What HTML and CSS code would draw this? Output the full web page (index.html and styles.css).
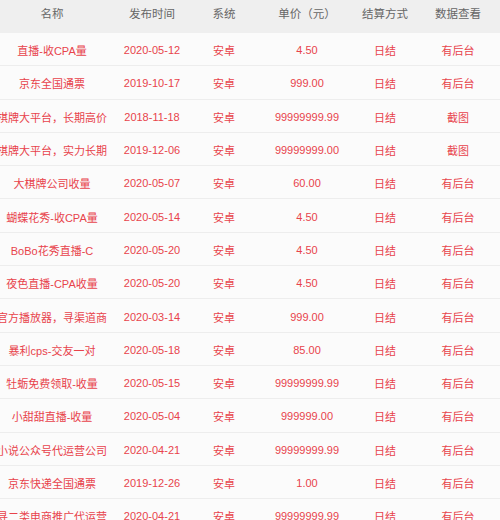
FILE: index.html
```html
<!DOCTYPE html>
<html lang="zh-CN">
<head>
<meta charset="utf-8">
<title>列表</title>
<link rel="stylesheet" href="styles.css">
</head>
<body>
<div class="table">
  <div class="row head">
    <div class="cell">名称</div><div class="cell">发布时间</div><div class="cell">系统</div><div class="cell">单价（元）</div><div class="cell">结算方式</div><div class="cell">数据查看</div>
  </div>
  <div class="row"><div class="cell">直播-收CPA量</div><div class="cell">2020-05-12</div><div class="cell">安卓</div><div class="cell">4.50</div><div class="cell">日结</div><div class="cell">有后台</div></div>
  <div class="row"><div class="cell">京东全国通票</div><div class="cell">2019-10-17</div><div class="cell">安卓</div><div class="cell">999.00</div><div class="cell">日结</div><div class="cell">有后台</div></div>
  <div class="row"><div class="cell">棋牌大平台，长期高价</div><div class="cell">2018-11-18</div><div class="cell">安卓</div><div class="cell">99999999.99</div><div class="cell">日结</div><div class="cell">截图</div></div>
  <div class="row"><div class="cell">棋牌大平台，实力长期</div><div class="cell">2019-12-06</div><div class="cell">安卓</div><div class="cell">99999999.00</div><div class="cell">日结</div><div class="cell">截图</div></div>
  <div class="row"><div class="cell">大棋牌公司收量</div><div class="cell">2020-05-07</div><div class="cell">安卓</div><div class="cell">60.00</div><div class="cell">日结</div><div class="cell">有后台</div></div>
  <div class="row"><div class="cell">蝴蝶花秀-收CPA量</div><div class="cell">2020-05-14</div><div class="cell">安卓</div><div class="cell">4.50</div><div class="cell">日结</div><div class="cell">有后台</div></div>
  <div class="row"><div class="cell">BoBo花秀直播-C</div><div class="cell">2020-05-20</div><div class="cell">安卓</div><div class="cell">4.50</div><div class="cell">日结</div><div class="cell">有后台</div></div>
  <div class="row"><div class="cell">夜色直播-CPA收量</div><div class="cell">2020-05-20</div><div class="cell">安卓</div><div class="cell">4.50</div><div class="cell">日结</div><div class="cell">有后台</div></div>
  <div class="row"><div class="cell">官方播放器，寻渠道商</div><div class="cell">2020-03-14</div><div class="cell">安卓</div><div class="cell">999.00</div><div class="cell">日结</div><div class="cell">有后台</div></div>
  <div class="row"><div class="cell">暴利cps-交友一对</div><div class="cell">2020-05-18</div><div class="cell">安卓</div><div class="cell">85.00</div><div class="cell">日结</div><div class="cell">有后台</div></div>
  <div class="row"><div class="cell">牡蛎免费领取-收量</div><div class="cell">2020-05-15</div><div class="cell">安卓</div><div class="cell">99999999.99</div><div class="cell">日结</div><div class="cell">有后台</div></div>
  <div class="row"><div class="cell">小甜甜直播-收量</div><div class="cell">2020-05-04</div><div class="cell">安卓</div><div class="cell">999999.00</div><div class="cell">日结</div><div class="cell">有后台</div></div>
  <div class="row"><div class="cell">小说公众号代运营公司</div><div class="cell">2020-04-21</div><div class="cell">安卓</div><div class="cell">99999999.99</div><div class="cell">日结</div><div class="cell">有后台</div></div>
  <div class="row"><div class="cell">京东快递全国通票</div><div class="cell">2019-12-26</div><div class="cell">安卓</div><div class="cell">1.00</div><div class="cell">日结</div><div class="cell">有后台</div></div>
  <div class="row"><div class="cell">寻二类电商推广代运营</div><div class="cell">2020-04-21</div><div class="cell">安卓</div><div class="cell">99999999.99</div><div class="cell">日结</div><div class="cell">有后台</div></div>
</div>
</body>
</html>
```
FILE: styles.css
```css
html, body {
  margin: 0;
  padding: 0;
  background: #fafafa;
  overflow: hidden;
}
body {
  font-family: "Liberation Sans", Arial, "Noto Sans CJK SC", sans-serif;
  font-size: 11px;
  color: #e8434b;
}
.table {
  display: flex;
  flex-direction: column;
  width: 512px;
}
.row {
  display: grid;
  grid-template-columns: 104px 96px 48px 118px 38px 108px;
  height: 33.3px;
  box-sizing: border-box;
  border-bottom: 1px solid #ededed;
  background: #fbfbfb;
}
.row.head {
  height: 33px;
  background: #efefef;
  color: #666;
  font-size: 11.5px;
  border-bottom: none;
}
.cell {
  display: flex;
  align-items: center;
  justify-content: center;
  white-space: nowrap;
  padding-top: 2px;
}
.head .cell {
  padding-top: 0;
  padding-bottom: 7px;
}
```
